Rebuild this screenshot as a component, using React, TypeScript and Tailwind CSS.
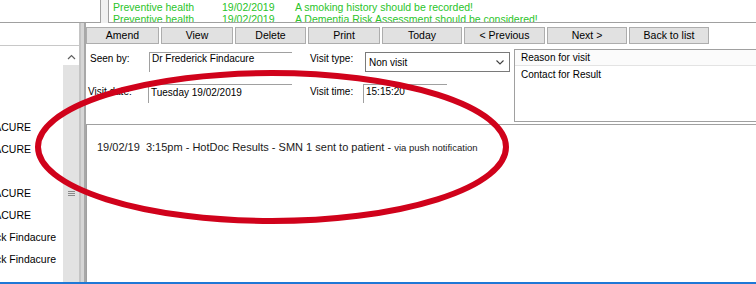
const green = [
  ['Preventive health', '19/02/2019', 'A smoking history should be recorded!'],
  ['Preventive health', '19/02/2019', 'A Dementia Risk Assessment should be considered!'],
]

const buttons: [string, string][] = [
  ['Amend', 'w-[73px]'],
  ['View', 'w-[72px]'],
  ['Delete', 'w-[71px]'],
  ['Print', 'w-[72px]'],
  ['Today', 'w-[80px]'],
  ['< Previous', 'w-[81px]'],
  ['Next >', 'w-[80px]'],
  ['Back to list', 'w-[80px]'],
]

// tail of each name row; pr sets where the clipped text ends
const names: [string, string][] = [
  ['', 'pr-[32px]'],
  ['', 'pr-[32px]'],
  ['', 'pr-[32px]'],
  ['DR FREDERICK FINDACURE', 'pr-[32px]'],
  ['DR FREDERICK FINDACURE', 'pr-[32px]'],
  ['', 'pr-[32px]'],
  ['DR FREDERICK FINDACURE', 'pr-[32px]'],
  ['DR FREDERICK FINDACURE', 'pr-[32px]'],
  ['Dr Frederick Findacure', 'pr-[7px]'],
  ['Dr Frederick Findacure', 'pr-[7px]'],
]

export default function App() {
  return (
    <div className="relative w-[756px] h-[284px] overflow-hidden bg-white flex flex-col font-['Liberation_Sans',Arial,sans-serif] text-[10px] text-black">
      {/* top strip with alerts */}
      <div className="h-[23px] shrink-0 flex bg-[#f0f0f0]">
        <div className="w-[101px] bg-white border-r border-b border-[#a0a0a0]"></div>
        <div className="w-[7px]"></div>
        <div className="flex-1 bg-white border-l border-b border-[#a0a0a0] overflow-hidden pl-[4px] pt-[1px] text-[10.5px] leading-[12px] text-[#2ac42a]">
          {green.map((r, i) => (
            <div key={i} className="flex whitespace-nowrap">
              <span className="w-[109px]">{r[0]}</span>
              <span className="w-[73px]">{r[1]}</span>
              <span>{r[2]}</span>
            </div>
          ))}
        </div>
      </div>

      <div className="flex-1 flex min-h-0">
        {/* patient list */}
        <div className="w-[79px] flex flex-col">
          <div className="h-[23px] shrink-0 border-b border-[#c8c8c8]"></div>
          <div className="flex-1 flex min-h-0">
            <div className="w-[63px] pt-[5px] overflow-hidden">
              {names.map(([t, pr], i) => (
                <div key={i} className={`h-[22px] flex items-center justify-end overflow-hidden whitespace-nowrap text-[10.5px] ${pr}`}>
                  {t}
                </div>
              ))}
            </div>
            <div className="w-[16px] mt-[3px] bg-[#e2e2e2] flex flex-col">
              <div className="h-[16px] bg-white flex items-center justify-center">
                <svg width="9" height="6" viewBox="0 0 9 6">
                  <path d="M1 5 L4.5 1.5 L8 5" fill="none" stroke="#606060" strokeWidth="1.2" />
                </svg>
              </div>
              <div className="h-[126px]"></div>
              <div className="flex flex-col gap-[1px] items-center">
                <div className="w-[7px] h-[1px] bg-[#8a8a8a]"></div>
                <div className="w-[7px] h-[1px] bg-[#8a8a8a]"></div>
                <div className="w-[7px] h-[1px] bg-[#8a8a8a]"></div>
              </div>
            </div>
          </div>
        </div>

        {/* splitter */}
        <div className="w-[7px] flex">
          <div className="w-[2px] bg-[#c4c4c4]"></div>
          <div className="w-[3px] bg-[#d6d6d6]"></div>
          <div className="w-[2px] bg-[#a8a8a8]"></div>
        </div>

        {/* consultation panel */}
        <div className="flex-1 flex flex-col min-w-0">
          <div className="h-[101px] shrink-0 flex flex-col">
            <div className="h-[21px] pt-[4px] flex gap-[2px]">
              {buttons.map(([b, w]) => (
                <div key={b} className={`${w} h-[17px] bg-[#e1e1e1] border border-[#adadad] flex items-center justify-center text-[10.5px]`}>
                  {b}
                </div>
              ))}
            </div>

            <div className="flex">
              <div className="flex flex-col pt-[8px] gap-[12px]">
                <div className="flex h-[20px]">
                  <div className="w-[63px] pl-[4px] leading-[12px] pt-[1px]">Seen by:</div>
                  <div className="w-[143px] border-t border-l border-[#a0a0a0] pl-[2px] leading-[12px]">Dr Frederick Findacure</div>
                  <div className="w-[18px]"></div>
                  <div className="w-[55px] leading-[12px] pt-[1px]">Visit type:</div>
                  <div className="w-[145px] border border-[#7a7a7a] pl-[3px] pr-[5px] flex items-center justify-between">
                    <span>Non visit</span>
                    <svg width="8" height="5" viewBox="0 0 8 5">
                      <path d="M0.5 0.5 L4 4 L7.5 0.5" fill="none" stroke="#404040" strokeWidth="1.1" />
                    </svg>
                  </div>
                </div>
                <div className="flex h-[19px]">
                  <div className="w-[62px] pl-[2px] leading-[12px] pt-[2px]">Visit date:</div>
                  <div className="w-[144px] border-t border-l border-[#a0a0a0] pl-[2px] pt-[2px] leading-[12px]">Tuesday 19/02/2019</div>
                  <div className="w-[18px]"></div>
                  <div className="w-[53px] leading-[12px] pt-[2px]">Visit time:</div>
                  <div className="w-[84px] border-t border-l border-[#a0a0a0] pl-[2px] pt-[1px] leading-[12px]">15:15:20</div>
                </div>
              </div>

              <div className="ml-[4px] mt-[5px] flex-1 h-[73px] border-t border-l border-b border-[#a0a0a0] flex flex-col">
                <div className="h-[16px] bg-[#fbfbfb] border-b border-[#e3e3e3] pl-[6px] flex items-center">Reason for visit</div>
                <div className="h-[16px] pl-[6px] flex items-center">Contact for Result</div>
              </div>
            </div>
          </div>

          <div className="flex-1 border-t border-l border-[#a0a0a0] pt-[16px] pl-[10px] whitespace-nowrap leading-[12px] text-[11px] text-[#1a1a1a]">
            19/02/19&nbsp;&nbsp;3:15pm - HotDoc Results - SMN 1 sent to patient - <span className="text-[9.5px]">via push notification</span>
          </div>
        </div>
      </div>

      <div className="h-[2px] shrink-0 bg-[#1f78d6]"></div>

      {/* red annotation */}
      <svg className="absolute left-0 top-0 pointer-events-none" width="756" height="284">
        <ellipse cx="272" cy="147" rx="234" ry="74" fill="none" stroke="#d0021b" strokeWidth="6" />
      </svg>
    </div>
  )
}
